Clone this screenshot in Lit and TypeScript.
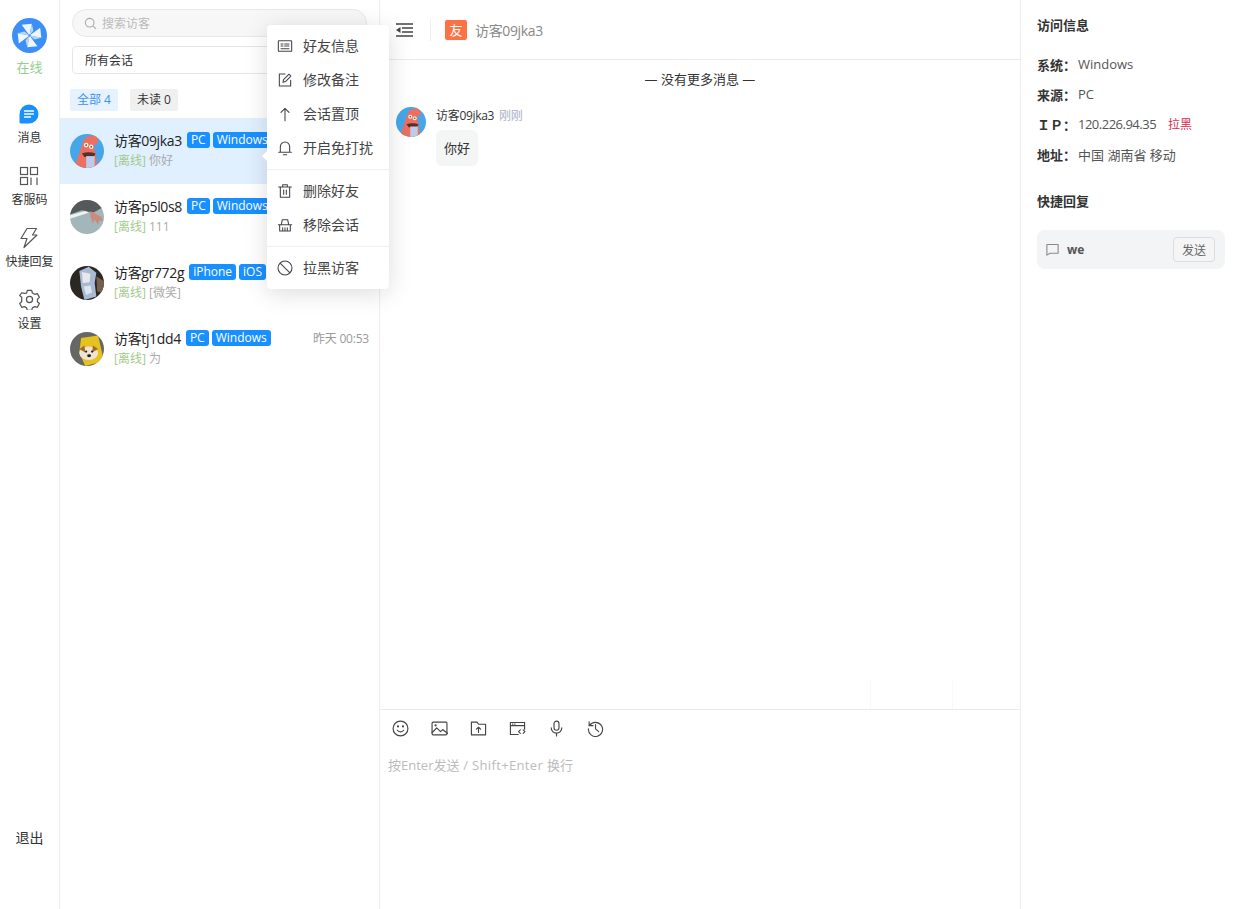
import { LitElement, css, html, svg } from 'lit';
import { customElement } from 'lit/decorators.js';

const icon = (body: unknown, size = 18, sw = 1.7) => html`<svg width=${size} height=${size} viewBox="0 0 24 24" fill="none" stroke="currentColor" stroke-width=${sw} stroke-linecap="round" stroke-linejoin="round">${body}</svg>`;

// soft vector stand-ins for the visitor photos
const patrick = svg`<g clip-path="circle(20px at 20px 20px)"><rect width="40" height="40" fill="#46a6ea"/>
	<path d="M0 30L10 40h26l6-10v10H0z" fill="#4d8fe0"/>
	<path d="M5 40C8 30 12 20 15 10c1-5 7-9 12-8 4 1 8 5 6 8-2 2-4 2-5 4 2 8 4 17 4 26z" fill="#ec6f60"/>
	<circle cx="19" cy="13" r="2.800" fill="#f2ede2"/><circle cx="25" cy="15" r="2.600" fill="#f2ede2"/>
	<circle cx="19" cy="13" r="1" fill="#444"/><circle cx="25" cy="15" r="1" fill="#444"/>
	<path d="M14 23c5-2 11-2 16 0l-2 4H17z" fill="#55302c"/><rect x="19" y="26" width="10" height="14" fill="#bccbe8"/></g>`;
const hand = svg`<g clip-path="circle(20px at 20px 20px)"><rect width="40" height="40" fill="#a3b6b9"/>
	<path d="M0 0h40v8L27 15 14 12 0 17z" fill="#56595a"/><path d="M0 18l18-5 4 2-22 7z" fill="#eef2f1"/>
	<path d="M24 13l13 7 2 5-5-1-1 5-4-6-2 5-3-9z" fill="#c98b7d"/></g>`;
const photo = svg`<g clip-path="circle(20px at 20px 20px)"><rect width="40" height="40" fill="#2b2723"/>
	<path d="M11 6l11-5 9 7-2 12 2 16-14 4-4-16z" fill="#a9bad6"/><path d="M14 7l10 2-1 10-8 1z" fill="#e8e8e6"/>
	<path d="M16 24l8-1 2 8-7 3z" fill="#dfe5f0"/><path d="M31 12l9 6v14l-8-2z" fill="#75604c"/></g>`;
const dog = svg`<g clip-path="circle(20px at 20px 20px)"><rect width="40" height="40" fill="#666664"/>
	<path d="M13 7l20-3 7 30-22 6-7-16z" fill="#e6c21f"/><ellipse cx="22" cy="25" rx="11" ry="8" fill="#efe3d2"/>
	<path d="M11 20l6-4 1 8zM33 20l-6-4-1 8z" fill="#a9662a"/><circle cx="19" cy="23" r="1.300" fill="#222"/><circle cx="26" cy="23" r="1.300" fill="#222"/>
	<ellipse cx="22.500" cy="28" rx="2.300" ry="1.700" fill="#222"/></g>`;

// only the last row's time shows, the open menu sits over the other three
const rows = [
	{ name: '访客09jka3', tags: ['PC', 'Windows'], msg: '你好', time: '', av: patrick, active: true },
	{ name: '访客p5l0s8', tags: ['PC', 'Windows'], msg: '111', time: '', av: hand },
	{ name: '访客gr772g', tags: ['iPhone', 'iOS'], msg: '[微笑]', time: '', av: photo },
	{ name: '访客tj1dd4', tags: ['PC', 'Windows'], msg: '为', time: '昨天 00:53', av: dog },
];

const nav = [
	{
		label: '消息',
		icon: html`<svg width="20" height="20" viewBox="0 0 20 20"><path d="M10 .5a9.500 9.500 0 1 1 0 19H2a1.500 1.500 0 0 1-1.500-1.500V10A9.500 9.500 0 0 1 10 .5z" fill="#1890ff"/><path d="M5.500 7h9M5.500 10h9M5.500 13h6" stroke="#fff" stroke-width="1.300" stroke-linecap="round"/></svg>`,
	},
	{
		label: '客服码',
		icon: html`<svg width="20" height="20" viewBox="0 0 20 20" fill="none" stroke="#555" stroke-width="1.200"><rect x="1.500" y="1.500" width="7" height="7"/><rect x="11.500" y="1.500" width="7" height="7"/><rect x="1.500" y="11.500" width="7" height="7"/><path d="M12 11.500v7.500M18 11.500v7.500"/></svg>`,
	},
	{
		label: '快捷回复',
		icon: html`<svg width="20" height="22" viewBox="0 0 20 22" fill="none" stroke="#555" stroke-width="1.200" stroke-linejoin="round"><path d="M8 1.500h9.500l-4 6.500h4.500L5 20.500 8 11.500H2z"/></svg>`,
	},
	{
		label: '设置',
		icon: html`<svg width="21" height="21" viewBox="0 0 24 24" fill="none" stroke="#555" stroke-width="1.400" stroke-linejoin="round"><path d="M9.500 2h5l.8 3 2.700 1.500 3-.8 2.300 4.300-2.200 2 0 3-.1 0 2.300 2-2.300 4.300-3-.8-2.700 1.500-.8 2.900h-5l-.8-2.900L6.100 20.500l-3 .8L.8 17l2.300-2V9.900L.8 8l2.300-3.300 3 .8L8.700 5z" transform="translate(0 -.4)"/><circle cx="12" cy="12" r="3.500"/></svg>`,
	},
];

const menu = [
	[
		{ label: '好友信息', icon: svg`<rect x="2" y="4" width="20" height="16" rx="1"/><path d="M6 9h3M11.500 9H18M6 12h3M11.500 12H18M6 16h12"/>` },
		{ label: '修改备注', icon: svg`<path d="M12 3H3.500v18h17v-8.500"/><path d="M9 15.500l.8-4L18 3.300l2.800 2.800-8 8.300z"/>` },
		{ label: '会话置顶', icon: svg`<path d="M12 22V3.500M6 9.500l6-6 6 6"/>` },
		{ label: '开启免打扰', icon: svg`<path d="M5 18.500V10a7 7 0 0 1 14 0v8.500M2.500 18.500h19M9.500 22h5"/>` },
	],
	[
		{ label: '删除好友', icon: svg`<path d="M2.500 6h19M8.500 6V2.500h7V6M5 6v15.500h14V6M10 10.500v6.500M14 10.500v6.500"/>` },
		{ label: '移除会话', icon: svg`<path d="M2 11.500h20M4 11.500V21h16v-9.500M6.500 11.500L8 4h8l1.500 7.500M8.500 16v5M12 16v5M15.500 16v5"/>` },
	],
	[{ label: '拉黑访客', icon: svg`<circle cx="12" cy="12" r="10.500"/><path d="M5 5l14 14"/>` }],
];

const tools = [
	svg`<circle cx="12" cy="12" r="10.500"/><path d="M7.500 14.500c2.200 3 6.800 3 9 0"/><circle cx="8.500" cy="9" r=".7"/><circle cx="15.500" cy="9" r=".7"/>`,
	svg`<rect x="1.500" y="3" width="21" height="18" rx="1.500"/><path d="M1.500 18l6.500-7 5.500 5.500 3-3 7 5.500"/><circle cx="6.500" cy="7.500" r=".8"/>`,
	svg`<path d="M2 3h8l2 3h10v15H2zM12 17.500v-7M9 13l3-3 3 3"/>`,
	svg`<path d="M22 13V3.500H2v17h11M2 8h20M5 5.800h.5M8 5.800h.5M16 14l-2.500 2.500L16 19M20 14l2.500 2.500L20 19"/>`,
	svg`<rect x="8.500" y="1.500" width="7" height="13" rx="3.500"/><path d="M4.500 11a7.500 7.500 0 0 0 15 0M12 18.500v4"/>`,
	svg`<path d="M3 2.500V8h5.500M3.500 8A10 10 0 1 1 2 12.500M12 6.500V12.500l4.500 4"/>`,
];

@customElement('app-root')
export class AppRoot extends LitElement {
	static styles = css`
		:host {
			display: flex;
			position: relative;
			height: 909px;
			overflow: hidden;
			background: #fff;
			color: #333;
			font-family: "Open Sans", "Noto Sans CJK SC", sans-serif;
			font-size: 13px;
		}
		.side {
			width: 59px;
			flex: none;
			border-right: 1px solid #eee;
			display: flex;
			flex-direction: column;
			align-items: center;
			padding-top: 18px;
		}
		.logo {
			width: 35px;
			height: 35px;
			border-radius: 50%;
			background: #3b8ff7;
			display: flex;
			align-items: center;
			justify-content: center;
		}
		.status {
			color: #92cf8e;
			font-size: 13px;
			line-height: 18px;
			margin: 5px 0 25px;
		}
		.nav {
			height: 62px;
			display: flex;
			flex-direction: column;
			align-items: center;
			font-size: 12px;
			color: #333;
			white-space: nowrap;
		}
		.nav .ic {
			height: 25px;
			display: flex;
			align-items: center;
			justify-content: center;
		}
		.nav span {
			line-height: 18px;
			margin-top: 3px;
		}
		.logout {
			margin-top: auto;
			margin-bottom: 62px;
			line-height: 18px;
			font-size: 14px;
			color: #333;
		}
		.list {
			width: 319px;
			flex: none;
			border-right: 1px solid #eee;
		}
		.search {
			margin: 9px 12px 0;
			height: 26px;
			border: 1px solid #e8e8e8;
			border-radius: 14px;
			background: #f7f7f7;
			display: flex;
			align-items: center;
			gap: 5px;
			padding-left: 11px;
			color: #bbb;
			font-size: 12px;
		}
		.select {
			margin: 9px 12px 0;
			height: 26px;
			border: 1px solid #e6e6e6;
			border-radius: 4px;
			display: flex;
			align-items: center;
			padding-left: 12px;
			font-size: 12px;
		}
		.tabs {
			display: flex;
			gap: 12px;
			padding: 15px 10px 7px;
		}
		.tab {
			width: 48px;
			height: 22px;
			line-height: 22px;
			text-align: center;
			font-size: 12px;
			border-radius: 2px;
			background: #f0f0f0;
		}
		.tab.on {
			background: #e6f3ff;
			color: #3c8ff5;
		}
		.row {
			height: 66px;
			display: flex;
			align-items: center;
			gap: 10px;
			padding: 0 10px;
		}
		.row.on {
			background: #e1f0ff;
		}
		.av {
			flex: none;
			display: block;
		}
		.body {
			flex: 1;
			min-width: 0;
			padding-bottom: 2px;
		}
		.top {
			display: flex;
			align-items: center;
			gap: 3px;
			height: 20px;
		}
		.name {
			font-size: 14px;
			letter-spacing: -0.35px;
			color: #222;
			margin-right: 2px;
			white-space: nowrap;
		}
		.tag {
			background: #1890ff;
			color: #fff;
			font-size: 12px;
			line-height: 16px;
			padding: 0 4px;
			border-radius: 3px;
		}
		.time {
			margin-left: auto;
			font-size: 12px;
			letter-spacing: -0.2px;
			color: #999;
			white-space: nowrap;
		}
		.sub {
			font-size: 12px;
			line-height: 18px;
			margin-top: 2px;
			color: #aaa;
		}
		.sub b {
			font-weight: 400;
			color: #a3c98b;
		}
		.main {
			flex: 1;
			min-width: 0;
			display: flex;
			flex-direction: column;
		}
		.head {
			height: 59px;
			flex: none;
			border-bottom: 1px solid #eaeaea;
			display: flex;
			align-items: center;
			padding-left: 16px;
			color: #888;
			font-size: 14px;
		}
		.head .name2 {
			letter-spacing: -0.35px;
		}
		.head .sep {
			width: 1px;
			height: 22px;
			background: #eee;
			margin: 0 14px 0 17px;
		}
		.friend {
			width: 22px;
			height: 20px;
			background: #ff7043;
			border-radius: 2px;
			color: #fff;
			text-align: center;
			line-height: 20px;
			font-size: 13px;
			margin-right: 8px;
		}
		.msgs {
			flex: 1;
			display: flex;
			flex-direction: column;
		}
		.nomore {
			text-align: center;
			line-height: 18px;
			margin-top: 10px;
			font-size: 13px;
			color: #333;
		}
		.msg {
			display: flex;
			gap: 10px;
			padding: 19px 16px 0;
		}
		.who {
			font-size: 12px;
			line-height: 18px;
			letter-spacing: -0.3px;
			color: #333;
		}
		.who i {
			font-style: normal;
			color: #aab0c6;
			margin-left: 2px;
		}
		.bubble {
			display: inline-block;
			margin-top: 5px;
			background: #f4f5f5;
			border-radius: 6px;
			padding: 0 8px;
			height: 36px;
			line-height: 36px;
			font-size: 13px;
		}
		.ghost {
			margin-top: auto;
			height: 29px;
			display: flex;
			justify-content: flex-end;
		}
		.ghost div {
			width: 81px;
			border-left: 1px dotted #f1f3f6;
		}
		.ghost div:last-child {
			width: 67px;
		}
		.composer {
			height: 199px;
			flex: none;
			border-top: 1px solid #eaeaea;
		}
		.tools {
			display: flex;
			gap: 19px;
			padding: 8px 0 0 10px;
			color: #444;
		}
		.tools span {
			width: 20px;
			height: 20px;
			display: flex;
			align-items: center;
			justify-content: center;
		}
		.hint {
			padding: 17px 0 0 8px;
			font-size: 13px;
			line-height: 20px;
			color: #bbb;
		}
		.hint span {
			letter-spacing: 0.35px;
		}
		.info {
			width: 188px;
			flex: none;
			border-left: 1px solid #eee;
			padding: 0 16px;
		}
		.info h4 {
			margin: 0;
			font-size: 13px;
			font-weight: 700;
			line-height: 18px;
			color: #333;
		}
		.info h4.first {
			margin: 16px 0 15px;
		}
		.info h4.second {
			margin-top: 23px;
		}
		.kv {
			display: flex;
			height: 30px;
			align-items: center;
			font-size: 13px;
			color: #555;
			white-space: nowrap;
		}
		.kv label {
			width: 41px;
			flex: none;
			font-weight: 700;
			color: #333;
		}
		.kv .ip {
			letter-spacing: -0.5px;
		}
		.kv em {
			font-style: normal;
			font-size: 12px;
			color: #dc2d4e;
			margin-left: 12px;
		}
		.quick {
			margin-top: 20px;
			height: 39px;
			width: 188px;
			background: #f3f4f6;
			border-radius: 8px;
			display: flex;
			align-items: center;
			padding: 0 10px 0 8px;
			box-sizing: border-box;
			gap: 7px;
			color: #555;
			font-size: 12px;
			font-weight: 700;
		}
		.quick svg {
			color: #888;
		}
		.quick button {
			margin-left: auto;
			width: 42px;
			height: 25px;
			border: 1px solid #ddd;
			border-radius: 4px;
			background: #f5f5f5;
			color: #666;
			font: inherit;
			font-weight: 400;
			padding: 0;
		}
		.menu {
			position: absolute;
			left: 267px;
			top: 25px;
			width: 122px;
			padding: 4px 0;
			background: #fff;
			border-radius: 4px;
			box-shadow: 0 4px 24px rgba(0, 0, 0, 0.14);
			box-sizing: border-box;
		}
		.menu::before {
			content: '';
			position: absolute;
			left: -5px;
			top: 126px;
			border: 5px solid transparent;
			border-left: 0;
			border-right-color: #fff;
		}
		.item {
			height: 34px;
			display: flex;
			align-items: center;
			gap: 10px;
			padding-left: 10px;
			font-size: 14px;
			color: #444;
			white-space: nowrap;
		}
		.item span {
			padding-bottom: 2px;
		}
		.divider {
			height: 1px;
			background: #eef0f6;
			margin: 4px 0;
		}
	`;

	render() {
		return html`
			<div class="side">
				<div class="logo">
					<svg width="27" height="27" viewBox="0 0 24 24">
						${[0, 90, 180, 270].map((a) => svg`
							<g transform="rotate(${a} 12 12)">
								<path d="M12 12L5 2.500 14 1.500z" fill="#eef5fe" />
								<path d="M12 12L14 1.500 15.500 7.500z" fill="#b9d6fb" />
							</g>
						`)}
						<circle cx="12" cy="12" r="1" fill="#3b8ff7" />
					</svg>
				</div>
				<div class="status">在线</div>
				${nav.map((n) => html`<div class="nav"><div class="ic">${n.icon}</div><span>${n.label}</span></div>`)}
				<div class="logout">退出</div>
			</div>

			<div class="list">
				<div class="search">
					<svg width="13" height="13" viewBox="0 0 24 24" fill="none" stroke="#aaa" stroke-width="2"><circle cx="10.500" cy="10.500" r="8" /><path d="M17 17l5 5" /></svg>
					搜索访客
				</div>
				<div class="select">所有会话</div>
				<div class="tabs">
					<div class="tab on">全部 4</div>
					<div class="tab">未读 0</div>
				</div>
				${rows.map((r) => html`
					<div class="row ${r.active ? 'on' : ''}">
						<svg class="av" width="34" height="34" viewBox="0 0 40 40">${r.av}</svg>
						<div class="body">
							<div class="top">
								<span class="name">${r.name}</span>
								${r.tags.map((t) => html`<span class="tag">${t}</span>`)}
								${r.time ? html`<span class="time">${r.time}</span>` : ''}
							</div>
							<div class="sub"><b>[离线]</b> ${r.msg}</div>
						</div>
					</div>
				`)}
			</div>

			<div class="main">
				<div class="head">
					<svg width="17" height="14" viewBox="0 0 17 14" fill="none" stroke="#444" stroke-width="1.500"><path d="M0 1h17M6 5h11M6 9h11M0 13h17" /><path d="M4.500 4v6L0 7z" fill="#444" stroke="none" /></svg>
					<div class="sep"></div>
					<div class="friend">友</div>
					<span class="name2">访客09jka3</span>
				</div>
				<div class="msgs">
					<div class="nomore">— 没有更多消息 —</div>
					<div class="msg">
						<svg class="av" width="30" height="30" viewBox="0 0 40 40">${patrick}</svg>
						<div>
							<div class="who">访客09jka3 <i>刚刚</i></div>
							<div class="bubble">你好</div>
						</div>
					</div>
					<div class="ghost"><div></div><div></div></div>
				</div>
				<div class="composer">
					<div class="tools">${tools.map((t) => html`<span>${icon(t, 17, 1.6)}</span>`)}</div>
					<div class="hint">按Enter发送<span> / Shift+Enter </span>换行</div>
				</div>
			</div>

			<div class="info">
				<h4 class="first">访问信息</h4>
				<div class="kv"><label>系统：</label>Windows</div>
				<div class="kv"><label>来源：</label>PC</div>
				<div class="kv"><label>ＩＰ：</label><span class="ip">120.226.94.35</span><em>拉黑</em></div>
				<div class="kv"><label>地址：</label>中国 湖南省 移动</div>
				<h4 class="second">快捷回复</h4>
				<div class="quick">
					${icon(svg`<path d="M3 4h18v14H8l-5 3z" />`, 15)}
					<span>we</span>
					<button>发送</button>
				</div>
			</div>

			<div class="menu">
				${menu.map((group, i) => html`
					${i ? html`<div class="divider"></div>` : ''}
					${group.map((m) => html`<div class="item">${icon(m.icon, 16, 1.6)}<span>${m.label}</span></div>`)}
				`)}
			</div>
		`;
	}
}
